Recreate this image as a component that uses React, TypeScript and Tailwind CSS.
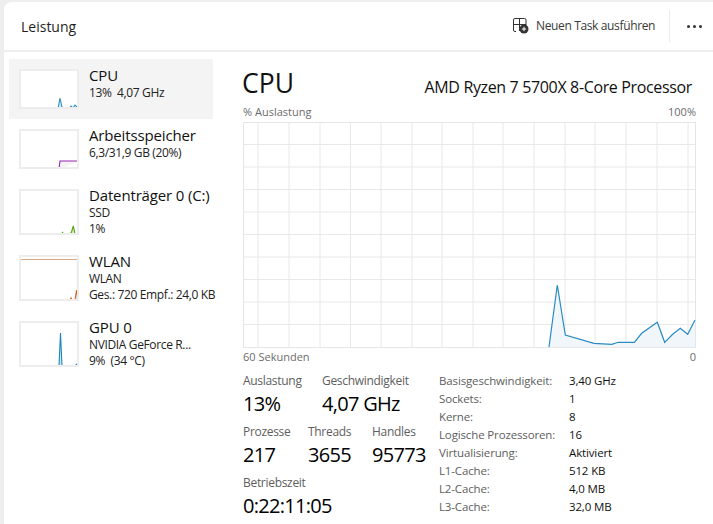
const font = { fontFamily: '"Open Sans", "Noto Sans", sans-serif' };

const sidebar = [
  { name: "CPU", lines: ["13%\u00a0 4,07 GHz"], h: "h-10", itemH: "h-[60px]", pts: "39,40 41,29 43,38 46,39 48,40 M50,40 52,37 54,39 56,36 58,38 60,37", color: "#2f8fc6", fill: "#d9ebf5" },
  { name: "Arbeitsspeicher", lines: ["6,3/31,9 GB (20%)"], h: "h-10", itemH: "h-[60px]", pts: "40,40 41,32 60,32", color: "#9528b4", fill: "#f4f2f4" },
  { name: "Datenträger 0 (C:)", lines: ["SSD", "1%"], h: "h-[46px]", itemH: "h-[66px]", pts: "43,45 43.5,43 44,45 M51,45 52.5,43 54.3,37 56,45", color: "#4da60c", fill: "#d8ecc8" },
  { name: "WLAN", lines: ["WLAN", "Ges.: 720 Empf.: 24,0 KB"], h: "h-[46px]", itemH: "h-[66px]", pts: "51,45 52,43 53,45 M56,45 57.6,35 59,45", color: "#c9682a", fill: "#f1d9c8" },
  { name: "GPU 0", lines: ["NVIDIA GeForce R...", "9%\u00a0 (34 °C)"], h: "h-[46px]", itemH: "h-[66px]", pts: "40,45 41.5,12 43,45 M56,45 59,42 60,45", color: "#1f86bf", fill: "#cfe4f1" },
];

const stats = [
  ["Basisgeschwindigkeit:", "3,40 GHz"],
  ["Sockets:", "1"],
  ["Kerne:", "8"],
  ["Logische Prozessoren:", "16"],
  ["Virtualisierung:", "Aktiviert"],
  ["L1-Cache:", "512 KB"],
  ["L2-Cache:", "4,0 MB"],
  ["L3-Cache:", "32,0 MB"],
];

const line =
  "306,225 314.3,163 322.3,213 351,221.3 368.7,222.3 375.3,220.3 391.3,220.3 398.7,211.3 414.3,200.3 421.7,220.3 429.7,212.3 437.3,206.3 444.7,212.3 452,198";

function Thumb({ h, pts, color, fill, wlan }: { h: string; pts: string; color: string; fill: string; wlan: boolean }) {
  const height = h === "h-10" ? 40 : 46;
  const parts = pts.split("M");
  return (
    <div className={`w-[60px] shrink-0 border-2 border-[#ededed] bg-white relative overflow-hidden ${h}`}>
      <svg width="60" height={height} viewBox={`0 0 60 ${height}`} className="absolute -left-[2px] -top-[2px]">
        {wlan && <path d="M2 4.5H58" stroke="#d8a888" strokeWidth="1.2" fill="none" />}
        {wlan && <path d="M58.5 5V45" stroke="#f4e2d6" strokeWidth="1.5" fill="none" />}
        {parts.map((p, i) => (
          <polyline
            key={i}
            points={p}
            fill={fill}
            stroke={color}
            strokeWidth="1.1"
          />
        ))}
      </svg>
    </div>
  );
}

function Stat({ label, value, w }: { label: string; value: string; w: string }) {
  return (
    <div className={w}>
      <div className="text-[12px] leading-[16px] tracking-[-0.025em] text-[#5e5e5e]">{label}</div>
      <div className="text-[20px] leading-[27px] tracking-[-0.035em] mt-[1px] text-black">{value}</div>
    </div>
  );
}

export default function App() {
  const vertical = [15, 46, 77, 107.5, 138, 169, 199, 230, 260, 291, 322, 352, 383, 414, 445];
  const horizontal = [22.5, 45, 67.5, 90, 112.5, 135, 157.5, 180, 202.5];
  return (
    <div className="w-[713px] h-[524px] overflow-hidden bg-[#eeeeee] pt-[2px] pl-[4px] text-black" style={font}>
      <div className="h-full bg-white rounded-tl-[8px] flex flex-col">
        <div className="h-[48px] shrink-0 flex items-center pl-[17px]">
          <div className="text-[14px] font-medium text-[#1f1f1f]">Leistung</div>
          <div className="ml-auto flex items-center">
            <svg width="16" height="16" viewBox="0 0 16 16" fill="none" className="mr-[7px]">
              <path d="M3 13.5H2A1.5 1.5 0 0 1 .5 12V2A1.5 1.5 0 0 1 2 .5h9.500A1.500 1.500 0 0 1 13 2v6M.5 6.500H13M6.500 .5V13" stroke="#333" strokeWidth="1" />
              <circle cx="11" cy="11" r="4.500" fill="#333" />
              <path d="M11 8.800v4.400M8.800 11h4.400" stroke="#fff" strokeWidth="1" />
            </svg>
            <span className="text-[12px] tracking-[-0.03em] text-[#3a3a3a] w-[120px] whitespace-nowrap">Neuen Task ausführen</span>
            <div className="w-px h-[32px] bg-[#ececec] ml-[13px]" />
            <div className="flex gap-[3px] ml-[17px] mr-[11px]">
              <span className="w-[3px] h-[3px] rounded-full bg-[#333]" />
              <span className="w-[3px] h-[3px] rounded-full bg-[#333]" />
              <span className="w-[3px] h-[3px] rounded-full bg-[#333]" />
            </div>
          </div>
        </div>
        <div className="h-[2px] shrink-0 bg-[#eeeeee] -ml-[1px]" />
        <div className="flex flex-1">
          <aside className="w-[238px] shrink-0 pl-[5px] pt-[7px]">
            {sidebar.map((item, i) => (
              <div key={item.name} className={`w-[204px] flex p-[10px] gap-[10px] ${item.itemH} ${i === 0 ? "bg-[#f4f4f4]" : ""}`}>
                <Thumb h={item.h} pts={item.pts} color={item.color} fill={item.fill} wlan={item.name === "WLAN"} />
                <div className="whitespace-nowrap -mt-[4px]">
                  <div className="text-[15px] leading-[20px] tracking-[-0.01em] text-[#111]">{item.name}</div>
                  {item.lines.map((l) => (
                    <div key={l} className="text-[12px] leading-[16px] tracking-[-0.03em] text-[#222]">{l}</div>
                  ))}
                </div>
              </div>
            ))}
          </aside>
          <main className="flex-1 pt-[11px] pr-[17px] pl-[1px]">
            <div className="flex items-end justify-between h-[38px]">
              <div className="text-[26.500px] leading-[38px] text-[#111] -ml-[1px] -mb-[1px]">CPU</div>
              <div className="text-[16px] leading-[20px] tracking-[-0.022em] mb-[4px] mr-[4px] text-[#111] whitespace-nowrap">AMD Ryzen 7 5700X 8-Core Processor</div>
            </div>
            <div className="flex justify-between text-[11px] leading-[16px] text-[#6b6b6b] mt-[3px]">
              <span>% Auslastung</span>
              <span>100%</span>
            </div>
            <div className="relative mt-[2px] w-[453px] h-[226px] border border-[#e6e6e6] bg-white">
              <svg width="453" height="226" viewBox="0 0 453 226" className="absolute -left-px -top-px">
                {vertical.map((x) => (
                  <line key={x} x1={x} y1="0" x2={x} y2="225" stroke="#e8e8e8" strokeWidth="1" />
                ))}
                {horizontal.map((y) => (
                  <line key={y} x1="0" y1={y} x2="453" y2={y} stroke="#e8e8e8" strokeWidth="1" />
                ))}
                <polygon points={`${line} 452,225`} fill="#f1f6fa" />
                <polyline points={line} fill="none" stroke="#2a8bc4" strokeWidth="1.2" />
              </svg>
            </div>
            <div className="flex justify-between text-[11px] leading-[16px] text-[#6b6b6b] mt-[1px]">
              <span>60 Sekunden</span>
              <span>0</span>
            </div>
            <div className="flex mt-[8px]">
              <div className="w-[196px] shrink-0 flex flex-col gap-[7px]">
                <div className="flex">
                  <Stat label="Auslastung" value="13%" w="w-[79px]" />
                  <Stat label="Geschwindigkeit" value="4,07 GHz" w="w-[110px]" />
                </div>
                <div className="flex">
                  <Stat label="Prozesse" value="217" w="w-[65px]" />
                  <Stat label="Threads" value="3655" w="w-[64px]" />
                  <Stat label="Handles" value="95773" w="w-[60px]" />
                </div>
                <Stat label="Betriebszeit" value="0:22:11:05" w="w-[120px]" />
              </div>
              <div className="grid grid-cols-[130px_1fr] auto-rows-[18px] text-[11.500px] leading-[16px] tracking-[-0.012em] whitespace-nowrap">
                {stats.map(([k, v]) => (
                  <div key={k} className="contents">
                    <span className="text-[#5e5e5e]">{k}</span>
                    <span className="text-[#111]">{v}</span>
                  </div>
                ))}
              </div>
            </div>
          </main>
        </div>
      </div>
    </div>
  );
}
